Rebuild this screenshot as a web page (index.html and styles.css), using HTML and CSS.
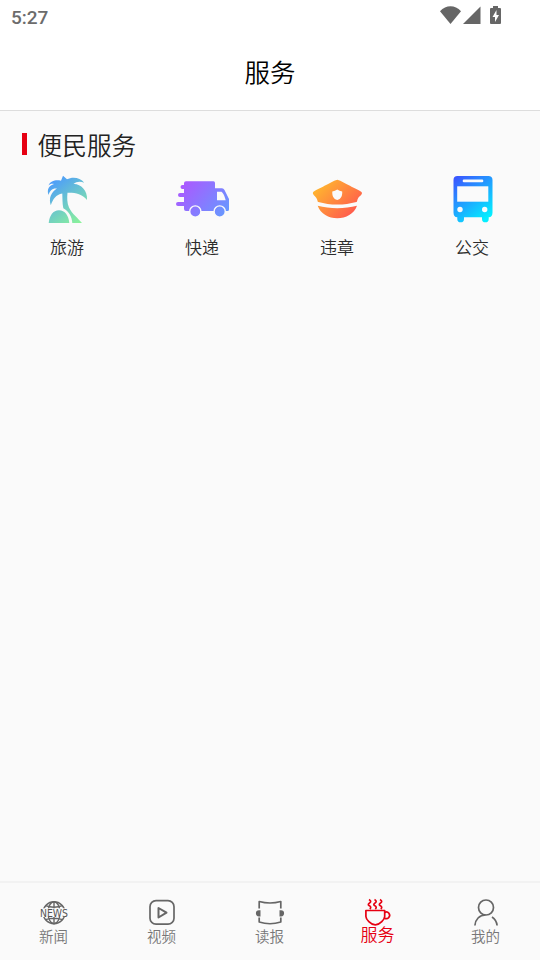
FILE: index.html
```html
<!DOCTYPE html>
<html lang="zh-CN">
<head>
  <meta charset="UTF-8">
  <meta name="viewport" content="width=device-width, initial-scale=1.0">
  <title>服务</title>
  <link rel="stylesheet" href="styles.css">
</head>
<body>
  <div class="status-bar">
    <span class="time">5:27</span>
    <svg class="status-icons" width="64" height="20" viewBox="0 0 64 20" fill="#666">
      <path d="M10.500 19 0 6.200C6-.3 15-.3 21 6.200z"/>
      <path d="M23 19 40.500 1.500V19z"/>
      <path fill-rule="evenodd" d="M53 1h5v2h2q1 0 1 1v14q0 1-1 1h-9q-1 0-1-1V4q0-1 1-1h2zM56.500 5 52.500 12h2.500v5l4-7h-2.500z"/>
    </svg>
  </div>

  <header class="header">
    <h1>服务</h1>
  </header>

  <main class="content">
    <h2 class="section-title">便民服务</h2>
    <div class="services">
      <a class="service">
        <svg viewBox="0 0 55 55">
          <defs>
            <linearGradient id="palm" gradientUnits="userSpaceOnUse" x1="10" y1="8" x2="42" y2="51">
              <stop offset="0" stop-color="#4a98ff"/>
              <stop offset="1" stop-color="#8cf598"/>
            </linearGradient>
          </defs>
          <g fill="url(#palm)">
            <path d="M23 3.700 27 7.300C32 4.500 40 5 44.300 10.700 40 9 36.500 9.500 33.500 12 40 11.500 48 18 47 28 42 22 35 20.500 27.500 20.800 27 26 27 31 29 35.500 32 42 38 46 42 51H32.300C32 45 29 39.500 23.300 36.300 22.300 31 22.500 26 22.300 21.500 16 22.500 13 27 10.800 33.300 8.500 26 11 20.500 17 16.500 12 16 10 18.500 8.500 23 6.500 17 9.500 13.500 14 12 11.500 11.500 10 12 8.500 13.500 10.500 8.800 16 7.500 21 8.800z"/>
            <path d="M8.700 51C9.500 43.500 13 38.300 19 38.300S28.500 43.500 29.300 51z"/>
          </g>
        </svg>
        <span>旅游</span>
      </a>
      <a class="service">
        <svg viewBox="0 0 55 55">
          <defs>
            <linearGradient id="truck" gradientUnits="userSpaceOnUse" x1="10" y1="8" x2="50" y2="42">
              <stop offset="0" stop-color="#ac58ff"/>
              <stop offset="1" stop-color="#6897ff"/>
            </linearGradient>
          </defs>
          <g fill="url(#truck)">
            <path d="M11 9.300H38.500Q40 9.300 40 11V16.300H47Q48.500 16.300 49.500 18L54 27V37.500Q54 39 52.500 39H11Q9 39 9 37V34H3A2 2 0 0 1 3 30H9V25H5A2 2 0 0 1 5 21H9V17H7.500A2 2 0 0 1 7.500 13H9V11.300Q9 9.300 11 9.300z"/>
          </g>
          <path fill="#fafafa" d="M42 19.700H46.500Q49 21.500 50.700 28.300H42z"/>
          <g fill="url(#truck)" stroke="#fafafa" stroke-width="1.400">
            <circle cx="20.300" cy="39.500" r="5.600"/>
            <circle cx="44.700" cy="39.500" r="5.600"/>
          </g>
        </svg>
        <span>快递</span>
      </a>
      <a class="service">
        <svg viewBox="0 0 55 55">
          <defs>
            <linearGradient id="cap" gradientUnits="userSpaceOnUse" x1="8" y1="14" x2="38" y2="44">
              <stop offset="0" stop-color="#ffb52f"/>
              <stop offset="1" stop-color="#ff5f4c"/>
            </linearGradient>
          </defs>
          <g fill="url(#cap)">
            <path d="M27.300 7.800C31 8.800 36 12 40 13.700 44 16.500 49 17.500 51.500 20 53 22 50.500 23.500 48.500 25.500 47 27.500 47.500 29.700 46.500 29.900 40 31.500 34 32.500 27.300 32.500S14.500 31.500 8.200 29.900C7.200 29.700 7.700 27.500 6 25.500 4.500 23.500 2 22 3.200 20 5.500 17.500 10.500 16.500 14.500 13.700 18.500 12 23.500 8.800 27.300 7.800z"/>
            <path d="M7.700 33.800C20 37 34.500 37 47 33.800 44 42 36 46.300 27.300 46.300S10.700 42 7.700 33.800z"/>
          </g>
          <path fill="#fafafa" d="M27.300 17.500Q29.500 19 32.200 19.500C32.500 24 31 27 27.300 28 23.500 27 22 24 22.300 19.500Q25 19 27.300 17.500z"/>
        </svg>
        <span>违章</span>
      </a>
      <a class="service">
        <svg viewBox="0 0 55 55">
          <defs>
            <linearGradient id="bus" gradientUnits="userSpaceOnUse" x1="10" y1="6" x2="42" y2="46">
              <stop offset="0" stop-color="#3b57ff"/>
              <stop offset="1" stop-color="#04eeff"/>
            </linearGradient>
          </defs>
          <g fill="url(#bus)">
            <path d="M12.500 3.900H43.300Q47.500 3.900 47.500 8V40.500Q47.500 45 43.700 45.300V47A3.300 3.300 0 0 1 37 47V45.300H19V47A3.300 3.300 0 0 1 12.300 47V45.300Q8.500 45 8.500 40.500V8Q8.500 3.900 12.500 3.900z"/>
          </g>
          <g fill="#fafafa">
            <rect x="17.700" y="7.600" width="20.600" height="2.700" rx="1.200"/>
            <rect x="12.200" y="14.300" width="31.100" height="15.400"/>
            <circle cx="15" cy="37.500" r="2.700"/>
            <circle cx="39.700" cy="37.500" r="2.700"/>
          </g>
        </svg>
        <span>公交</span>
      </a>
    </div>
  </main>

  <nav class="tabs">
    <a class="tab">
      <svg viewBox="0 0 30 30">
        <g fill="none" stroke="#666" stroke-width="1.400">
          <circle cx="15" cy="15.700" r="11"/>
          <ellipse cx="15" cy="15.700" rx="6" ry="11"/>
          <path d="M15 4.700v22M6.500 8.700q8.500 3 17 0M6.500 22.700q8.500-3 17 0"/>
        </g>
        <path fill="#fafafa" d="M0 11.300h30v8.700H0z"/>
        <text class="news-text" x="1" y="19.500" textLength="28" lengthAdjust="spacingAndGlyphs">NEWS</text>
      </svg>
      <span>新闻</span>
    </a>
    <a class="tab">
      <svg class="line" viewBox="0 0 30 30">
        <rect x="3" y="3.700" width="24" height="23.500" rx="6"/>
        <path stroke-width="2" d="M11.500 11v9.500l8-4.800z"/>
      </svg>
      <span>视频</span>
    </a>
    <a class="tab">
      <svg class="line" viewBox="0 0 30 30">
        <path d="M4.200 11.500V4.500Q15 7.500 25.800 4.500V11.500M4.200 20.500V25Q15 28.500 25.800 25V20.500"/>
        <path fill="#666" stroke="none" d="M5.500 13.200V19.400H4A3 3 0 0 1 4 13.200zM24.500 13.200V19.400H26A3 3 0 0 0 26 13.200z"/>
      </svg>
      <span>读报</span>
    </a>
    <a class="tab active">
      <svg class="line" viewBox="0 0 30 30">
        <path d="M2.900 13.500H21.700V19.500C21.700 22 17 27.800 12.300 27.800S2.900 22 2.900 19.500z"/>
        <path d="M21.700 15.400A3.300 3.300 0 1 1 21.400 21"/>
        <path d="M6 2.500c5 3-3 4 0 6q3 1.500.8 3.500M11.500 2.500c5 3-3 4 0 6q3 1.500.8 3.500M17 2.500c5 3-3 4 0 6q3 1.500.8 3.500"/>
      </svg>
      <span>服务</span>
    </a>
    <a class="tab">
      <svg class="line" viewBox="0 0 30 30">
        <circle cx="15" cy="10.500" r="7.500"/>
        <path d="M3.900 28.500C4.200 22.500 8.500 18 14.500 17.800M21 20C24 22 25.700 25 26.100 28.500"/>
      </svg>
      <span>我的</span>
    </a>
  </nav>
</body>
</html>
```

FILE: styles.css
```css
* {
  box-sizing: border-box;
}
body {
  margin: 0;
  height: 960px;
  display: flex;
  flex-direction: column;
  background: #fafafa;
  color: #2c2c2c;
  font-family: "Noto Sans CJK SC", sans-serif;
  font-weight: 350;
  overflow: hidden;
}
h1, h2 {
  margin: 0;
  font-weight: 350;
}
.status-bar {
  height: 34px;
  padding: 5px 36px 0 11px;
  display: flex;
  justify-content: space-between;
  background: #fff;
}
.time {
  padding-top: 1px;
  font: 500 19px/24px Roboto, sans-serif;
  color: #6c6c6c;
}
.header {
  height: 77px;
  background: #fff;
  border-bottom: 1px solid #ddd;
  text-align: center;
}
.header h1 {
  font-size: 25.500px;
  line-height: 73px;
  color: #000;
}
.content {
  flex: 1;
  padding-top: 15px;
}
.section-title {
  display: flex;
  align-items: center;
  gap: 11px;
  height: 36px;
  padding-left: 21.500px;
  color: #222;
  font-size: 24.700px;
  line-height: 34px;
}
.section-title::before {
  content: "";
  width: 5px;
  height: 22px;
  background: #e60012;
}
.services {
  display: grid;
  grid-template-columns: repeat(4, 1fr);
  padding-top: 10px;
}
.service {
  display: flex;
  flex-direction: column;
  align-items: center;
  font-size: 17px;
  line-height: 24px;
}
.service svg {
  width: 55px;
  height: 55px;
  margin-bottom: 8px;
}
.service span,
.tab span {
  padding-right: 1px;
}
.tabs {
  height: 79px;
  display: flex;
  border-top: 2px solid #f2f2f2;
}
.tab {
  flex: 1;
  padding-top: 14px;
  display: flex;
  flex-direction: column;
  align-items: center;
  color: #666;
  font-size: 14.500px;
  line-height: 18px;
}
.tab svg {
  width: 30px;
  height: 30px;
  overflow: visible;
}
.tab span {
  color: #777;
}
.tab.active,
.tab.active span {
  color: #e60012;
  font-size: 17px;
  line-height: 14px;
}
.line {
  fill: none;
  stroke: currentColor;
  stroke-width: 1.700;
  stroke-linejoin: round;
}
.news-text {
  font: 400 10.500px/12px "DejaVu Sans", sans-serif;
  fill: #555;
}
```
